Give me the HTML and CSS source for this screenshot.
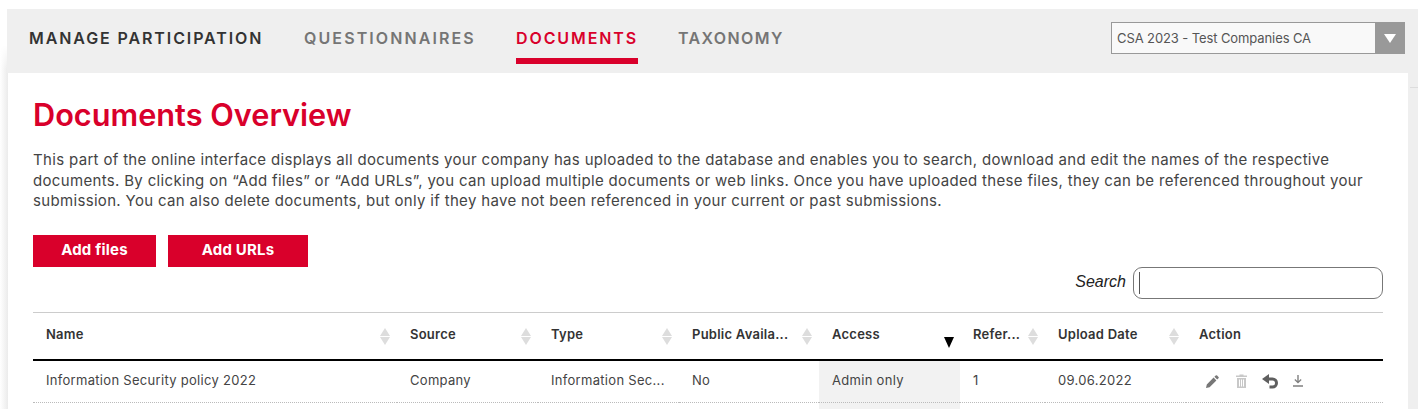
FILE: index.html
```html
<!DOCTYPE html>
<html lang="en">
<head>
    <meta charset="UTF-8">
    <meta name="viewport" content="width=device-width, initial-scale=1.0">
    <title>Documents Overview</title>
    <link rel="stylesheet" href="styles.css">
</head>
<body>

<header class="topbar">
    <nav class="tabs">
        <a class="tab tab-home" href="#">Manage Participation</a>
        <a class="tab tab-quest" href="#">Questionnaires</a>
        <a class="tab tab-active" href="#">Documents</a>
        <a class="tab tab-tax" href="#">Taxonomy</a>
    </nav>
    <div class="select-box">
        <span class="select-text">CSA 2023 - Test Companies CA</span>
        <span class="select-arrow"></span>
    </div>
</header>

<main class="page">
    <section class="content">
        <h1>Documents Overview</h1>
        <p class="intro">This part of the online interface displays all documents your company has uploaded to the database and enables you to search, download and edit the names of the respective documents. By clicking on “Add files” or “Add URLs”, you can upload multiple documents or web links. Once you have uploaded these files, they can be referenced throughout your submission. You can also delete documents, but only if they have not been referenced in your current or past submissions.</p>

        <div class="buttons">
            <a class="btn btn-files" href="#">Add files</a>
            <a class="btn btn-urls" href="#">Add URLs</a>
        </div>

        <div class="search-row">
            <label class="search-label" for="search">Search</label>
            <div class="search-box">
                <input class="search-input" id="search" type="text">
            </div>
        </div>

        <table class="doc-table">
            <thead>
                <tr>
                    <th class="col-name"><span class="sort"></span>Name</th>
                    <th class="col-source"><span class="sort"></span>Source</th>
                    <th class="col-type"><span class="sort"></span>Type</th>
                    <th class="col-public"><span class="sort"></span>Public Availa...</th>
                    <th class="col-access"><span class="sort-down"></span>Access</th>
                    <th class="col-refer"><span class="sort"></span>Refer...</th>
                    <th class="col-date"><span class="sort"></span>Upload Date</th>
                    <th class="col-action">Action</th>
                </tr>
            </thead>
            <tbody>
                <tr>
                    <td>Information Security policy 2022</td>
                    <td>Company</td>
                    <td>Information Sec...</td>
                    <td>No</td>
                    <td class="sorted">Admin only</td>
                    <td>1</td>
                    <td>09.06.2022</td>
                    <td>
                        <div class="actions">
                            <svg class="icon icon-edit" viewBox="0 0 13 13"><path d="M0 13l.8-3.600 6.800-6.800 2.800 2.800-6.800 6.800zM8.400 1.800L9.700.5a1 1 0 0 1 1.400 0l1.400 1.400a1 1 0 0 1 0 1.400l-1.300 1.300z"/></svg>
                            <svg class="icon icon-trash" viewBox="0 0 11 14"><path fill-rule="evenodd" d="M0 1.500h3.500V.5h4v1H11V3H0zM1 4h9v10H1zM3 5.500v7h1v-7zM5 5.500v7h1v-7zM7 5.500v7h1v-7z"/></svg>
                            <svg class="icon icon-undo" viewBox="0 0 17 15"><path d="M0 5L7 0v10z"/><path class="undo-tail" d="M5 5h5.500a3.800 3.800 0 0 1 0 8H7.500"/></svg>
                            <svg class="icon icon-down" viewBox="0 0 10 12"><path d="M4.300 0h1.400v6l2-2 .9.900L5 8.600 1.400 4.900l.9-.9 2 2zM0 10.300h10v1.400H0z"/></svg>
                        </div>
                    </td>
                </tr>
                <tr class="row-next">
                    <td></td><td></td><td></td><td></td><td class="sorted"></td><td></td><td></td><td></td>
                </tr>
            </tbody>
        </table>
    </section>
    <span class="side-line"></span>
</main>

</body>
</html>
```

FILE: styles.css
```css
html, body {
    margin: 0;
    padding: 0;
    height: 409px;
    overflow: hidden;
}

body {
    font-family: 'Inter', 'Liberation Sans', sans-serif;
    background: #fff;
    color: #333;
    padding-top: 9px;
    box-sizing: border-box;
}

.topbar {
    position: relative;
    z-index: 1;
    display: flex;
    justify-content: space-between;
    align-items: flex-start;
    height: 64px;
    margin-left: 7px;
    padding: 0 13px 0 22px;
    background: #efefef;
    box-sizing: border-box;
}

.tabs {
    display: flex;
    gap: 41px;
    padding-top: 19px;
}

.tab {
    display: block;
    height: 30px;
    font-size: 16px;
    font-weight: 600;
    line-height: 21px;
    letter-spacing: 1.9px;
    text-transform: uppercase;
    text-decoration: none;
    white-space: nowrap;
    color: #757575;
}

.tab-home {
    width: 234px;
    color: #333;
}

.tab-quest {
    width: 171px;
    letter-spacing: 2.1px;
}

.tab-active {
    width: 122px;
    color: #d9002b;
    border-bottom: 6px solid #d9002b;
}

.tab-tax {
    margin-left: -1px;
    letter-spacing: 1.4px;
}

.select-box {
    display: flex;
    width: 294px;
    height: 32px;
    margin-top: 13px;
    background: #f9f9f9;
    border: 1px solid #999;
    box-sizing: border-box;
}

.select-text {
    flex: 1;
    padding-left: 5px;
    font-size: 13px;
    line-height: 30px;
    letter-spacing: -0.1px;
    color: #555;
}

.select-arrow {
    display: flex;
    align-items: center;
    justify-content: center;
    width: 29px;
    background: #999;
}

.select-arrow::after {
    content: "";
    border-left: 6px solid transparent;
    border-right: 6px solid transparent;
    border-top: 9px solid #fff;
}

.page {
    position: relative;
    height: 336px;
    padding: 0 10px 0 8px;
    background: #efefef;
}

/* soft fade down the left side */
.page::before {
    content: "";
    position: absolute;
    left: 0;
    top: -28px;
    bottom: 0;
    width: 8px;
    background: linear-gradient(to right, #fff, #ebebeb);
    -webkit-mask-image: linear-gradient(to bottom, transparent, #000 24px);
    mask-image: linear-gradient(to bottom, transparent, #000 24px);
}

.side-line {
    position: absolute;
    right: 0;
    top: 14px;
    width: 8px;
    height: 1px;
    background: #ddd;
}

.content {
    height: 336px;
    padding: 23px 25px 0;
    background: #fff;
    box-sizing: border-box;
}

h1 {
    margin: 0 0 16px;
    font-size: 30.7px;
    font-weight: 600;
    line-height: 38px;
    color: #d9002b;
}

.intro {
    margin: 0 0 23.5px;
    font-size: 15px;
    line-height: 20.5px;
    letter-spacing: 0.33px;
    color: #444;
}

.buttons {
    display: flex;
    gap: 12px;
}

.btn {
    display: block;
    height: 32px;
    font-size: 15px;
    font-weight: 700;
    line-height: 29px;
    letter-spacing: 0.2px;
    text-align: center;
    text-decoration: none;
    color: #fff;
    background: #d9002b;
}

.btn-files {
    width: 123px;
}

.btn-urls {
    width: 140px;
}

.search-row {
    display: flex;
    justify-content: flex-end;
    align-items: center;
    gap: 7px;
}

.search-label {
    margin-top: -3px;
    font-family: 'Liberation Sans', sans-serif;
    font-size: 16px;
    font-style: italic;
    color: #222;
}

.search-box {
    position: relative;
    height: 32px;
}

/* text cursor sitting in the empty field */
.search-box::after {
    content: "";
    position: absolute;
    left: 6px;
    top: 5px;
    width: 1px;
    height: 22px;
    background: #555;
}

.search-input {
    display: block;
    width: 250px;
    height: 32px;
    padding: 0 5px;
    background: #fff;
    border: 1px solid #777;
    border-radius: 9px;
    box-sizing: border-box;
}

.doc-table {
    width: 1350px;
    margin-top: 13px;
    border-collapse: collapse;
    table-layout: fixed;
    font-size: 13px;
}

.doc-table th {
    position: relative;
    height: 47px;
    padding: 0 13px 4px;
    text-align: left;
    font-weight: 600;
    letter-spacing: 0.25px;
    white-space: nowrap;
    color: #333;
    border-top: 1px solid #ccc;
    border-bottom: 2px solid #000;
    box-sizing: border-box;
}

.doc-table td {
    height: 43px;
    padding: 0 13px 2px;
    letter-spacing: 0.3px;
    color: #444;
    border-bottom: 1px dotted #bbb;
    box-sizing: border-box;
}

.doc-table .row-next td {
    height: 7px;
    border-bottom: 0;
}

.doc-table td.sorted {
    background: #f2f2f2;
}

.col-name { width: 364px; }
.col-source { width: 141px; }
.col-type { width: 141px; }
.col-public { width: 140px; }
.col-access { width: 141px; }
.col-refer { width: 85px; }
.col-date { width: 141px; }

.sort, .sort-down {
    position: absolute;
    right: 7px;
    top: 15px;
}

.sort::before, .sort::after {
    content: "";
    display: block;
    border-left: 5px solid transparent;
    border-right: 5px solid transparent;
}

.sort::before {
    border-bottom: 8px solid #ddd;
    margin-bottom: 1px;
}

.sort::after {
    border-top: 8px solid #ddd;
}

.sort-down {
    top: 24px;
    right: 6px;
    border-left: 5.5px solid transparent;
    border-right: 5.5px solid transparent;
    border-top: 11px solid #000;
}

.actions {
    display: flex;
    align-items: center;
    margin-top: 2px;
    padding-left: 7px;
}

.icon {
    display: block;
    fill: #777;
}

.icon-edit {
    width: 13px;
    height: 13px;
    margin-right: 17px;
}

.icon-trash {
    width: 11px;
    height: 14px;
    margin-right: 15px;
    fill: #c8c8c8;
}

.icon-undo {
    width: 17px;
    height: 15px;
    margin-right: 14px;
    fill: #5f5f5f;
}

.undo-tail {
    fill: none;
    stroke: #5f5f5f;
    stroke-width: 3;
}

.icon-down {
    width: 10px;
    height: 12px;
    fill: #808080;
}
```
